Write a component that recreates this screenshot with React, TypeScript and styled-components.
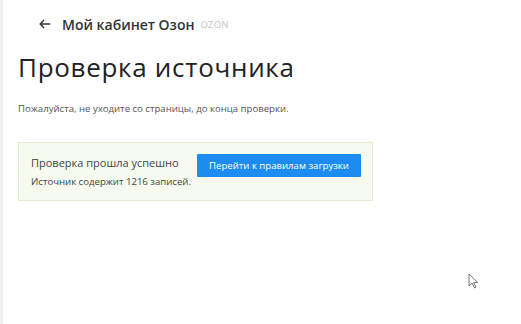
import React, { FC } from 'react';
import styled, { createGlobalStyle } from 'styled-components';

const GlobalStyle = createGlobalStyle`
  html, body {
    margin: 0;
    padding: 0;
    background: #ffffff;
    font-family: 'Open Sans', 'Noto Sans', sans-serif;
  }
`;

export default function App() {
  return (
    <>
      <GlobalStyle />
      <Page>
        <SideStrip />
        <Main>
          <Header>
            <BackArrow>
              <svg width="12" height="10" viewBox="0 0 12 10">
                <path d="M11 5H1.5M5 1L1.2 5L5 9" fill="none" stroke="#333" strokeWidth="1.4" />
              </svg>
            </BackArrow>
            <HeaderTitle>Мой кабинет Озон</HeaderTitle>
            <Brand>OZON</Brand>
          </Header>
          <Title>Проверка источника</Title>
          <Note>Пожалуйста, не уходите со страницы, до конца проверки.</Note>
          <ResultBox>
            <ResultText>
              <ResultTitle>Проверка прошла успешно</ResultTitle>
              <ResultInfo>Источник содержит 1216 записей.</ResultInfo>
            </ResultText>
            <PrimaryButton>Перейти к правилам загрузки</PrimaryButton>
          </ResultBox>
        </Main>
        <Cursor />
      </Page>
    </>
  );
}

const Cursor: FC = () => (
  <CursorWrap>
    <svg width="12" height="16" viewBox="0 0 12 16">
      <path d="M1 1V13L4 10L6.5 15L8 14.3L5.6 9.5H9.8Z" fill="#fff" stroke="#777" strokeWidth="1" />
    </svg>
  </CursorWrap>
);

const Page = styled.div`
  position: relative;
  display: flex;
  width: 521px;
  height: 324px;
  overflow: hidden;
`;

const SideStrip = styled.div`
  width: 3px;
  background: #eff0f2;
  flex-shrink: 0;
`;

const Main = styled.div`
  flex: 1;
  padding: 14px 0 0 15px;
`;

const Header = styled.div`
  display: flex;
  align-items: center;
  height: 20px;
  padding-left: 21px;
`;

const BackArrow = styled.span`
  display: flex;
  align-items: center;
  margin-right: 11px;
`;

const HeaderTitle = styled.span`
  font-size: 14px;
  font-weight: 600;
  color: #333;
`;

const Brand = styled.span`
  margin-left: 6px;
  font-size: 9.5px;
  color: #c2c6cc;
  letter-spacing: 0.2px;
`;

const Title = styled.h1`
  margin: 16px 0 0;
  font-size: 26px;
  font-weight: 400;
  line-height: 34px;
  letter-spacing: 0.7px;
  color: #222;
`;

const Note = styled.p`
  margin: 18px 0 0;
  font-size: 9.6px;
  color: #555;
`;

const ResultBox = styled.div`
  display: flex;
  align-items: flex-start;
  width: 355px;
  height: 59px;
  box-sizing: border-box;
  margin-top: 27px;
  padding: 11px 11px 0 12px;
  background: #f7fbef;
  border: 1px solid #e2edd3;
`;

const ResultText = styled.div`
  display: flex;
  flex-direction: column;
  flex: 1;
  padding-top: 1px;
`;

const ResultTitle = styled.span`
  font-size: 11px;
  color: #444;
`;

const ResultInfo = styled.span`
  margin-top: 5px;
  font-size: 9.6px;
  color: #444;
`;

const PrimaryButton = styled.button`
  width: 164px;
  height: 23px;
  padding: 0;
  border: none;
  border-radius: 1px;
  background: #1d8cf0;
  color: #fff;
  font-family: inherit;
  font-size: 9.6px;
`;

const CursorWrap = styled.div`
  position: absolute;
  left: 468px;
  top: 272px;
`;
